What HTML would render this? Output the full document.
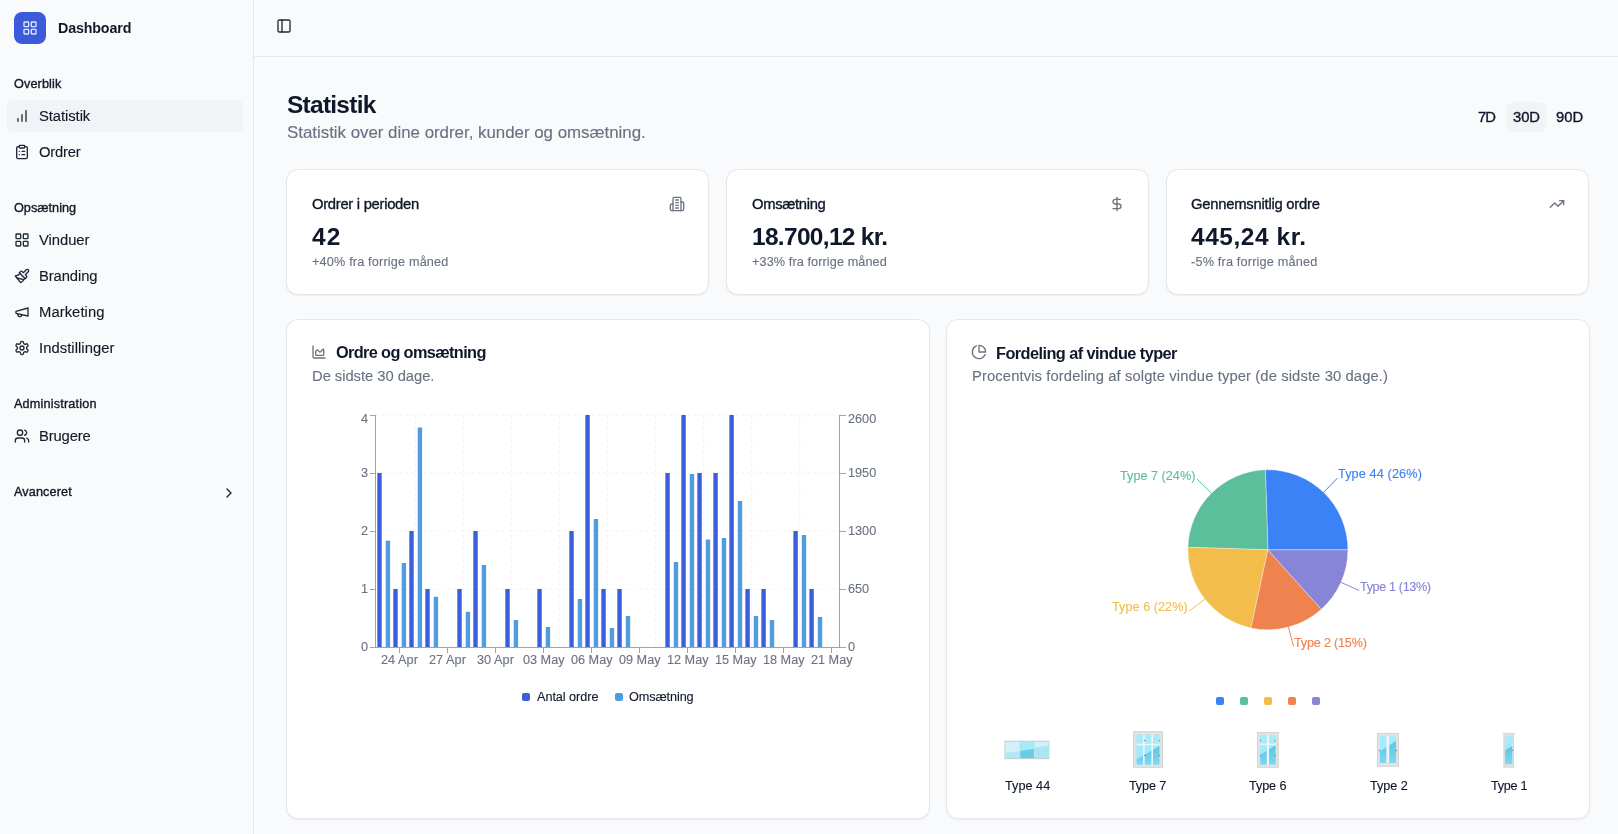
<!DOCTYPE html>
<html><head><meta charset="utf-8"><title>Statistik</title>
<style>
html,body{margin:0;padding:0;}
body{width:1618px;height:834px;overflow:hidden;position:relative;background:#f9fafb;font-family:"Liberation Sans",sans-serif;}
.t{position:absolute;white-space:nowrap;will-change:transform;}
.b{position:absolute;}
.ic{position:absolute;overflow:visible;}
.abs{position:absolute;overflow:visible;}
</style></head><body>
<div class="b" style="left:0px;top:0px;width:253px;height:834px;background:#f9fafb;"></div>
<div class="b" style="left:253px;top:0px;width:1px;height:834px;background:#e6e8ec;"></div>
<div class="b" style="left:254px;top:56px;width:1364px;height:1px;background:#e6e8ec;"></div>
<div class="b" style="left:14px;top:12px;width:32px;height:32px;background:#3b5bdb;border-radius:8px;"></div>
<svg class="ic" style="left:22px;top:20px;width:16px;height:16px;" viewBox="0 0 24 24" fill="none" stroke="#dfe6ff" stroke-width="2" stroke-linecap="round" stroke-linejoin="round"><rect width="7" height="7" x="3" y="3" rx="1"/><rect width="7" height="7" x="14" y="3" rx="1"/><rect width="7" height="7" x="14" y="14" rx="1"/><rect width="7" height="7" x="3" y="14" rx="1"/></svg>
<div class="t" style="left:58.20px;top:21.11px;font-size:14.28px;line-height:14.28px;color:#111827;font-weight:700;letter-spacing:-0.146px;">Dashboard</div>
<div class="t" style="left:14.40px;top:78.06px;font-size:12.68px;line-height:12.68px;color:#111827;-webkit-text-stroke:0.35px currentColor;letter-spacing:0.116px;">Overblik</div>
<div class="b" style="left:7px;top:100px;width:236px;height:31.5px;background:#f1f3f6;border-radius:6px;"></div>
<svg class="ic" style="left:14px;top:108.0px;width:16px;height:16px;" viewBox="0 0 24 24" fill="none" stroke="#1f2937" stroke-width="2" stroke-linecap="round" stroke-linejoin="round"><line x1="12" x2="12" y1="20" y2="10"/><line x1="18" x2="18" y1="20" y2="4"/><line x1="6" x2="6" y1="20" y2="16"/></svg>
<div class="t" style="left:38.60px;top:109.38px;font-size:14.79px;line-height:14.79px;color:#111827;-webkit-text-stroke:0.12px currentColor;letter-spacing:-0.061px;">Statistik</div>
<svg class="ic" style="left:14px;top:143.7px;width:16px;height:16px;" viewBox="0 0 24 24" fill="none" stroke="#1f2937" stroke-width="2" stroke-linecap="round" stroke-linejoin="round"><rect width="8" height="4" x="8" y="2" rx="1" ry="1"/><path d="M16 4h2a2 2 0 0 1 2 2v14a2 2 0 0 1-2 2H6a2 2 0 0 1-2-2V6a2 2 0 0 1 2-2h2"/><path d="M12 11h4"/><path d="M12 16h4"/><path d="M8 11h.01"/><path d="M8 16h.01"/></svg>
<div class="t" style="left:38.60px;top:145.08px;font-size:14.79px;line-height:14.79px;color:#111827;-webkit-text-stroke:0.12px currentColor;letter-spacing:-0.184px;">Ordrer</div>
<svg class="ic" style="left:14px;top:231.8px;width:16px;height:16px;" viewBox="0 0 24 24" fill="none" stroke="#1f2937" stroke-width="2" stroke-linecap="round" stroke-linejoin="round"><rect width="7" height="7" x="3" y="3" rx="1"/><rect width="7" height="7" x="14" y="3" rx="1"/><rect width="7" height="7" x="14" y="14" rx="1"/><rect width="7" height="7" x="3" y="14" rx="1"/></svg>
<div class="t" style="left:38.60px;top:233.18px;font-size:14.79px;line-height:14.79px;color:#111827;-webkit-text-stroke:0.12px currentColor;letter-spacing:-0.040px;">Vinduer</div>
<svg class="ic" style="left:14px;top:267.8px;width:16px;height:16px;" viewBox="0 0 24 24" fill="none" stroke="#1f2937" stroke-width="2" stroke-linecap="round" stroke-linejoin="round"><path d="M18.37 2.63 14 7l-1.59-1.59a2 2 0 0 0-2.82 0L8 7l9 9 1.59-1.59a2 2 0 0 0 0-2.82L17 10l4.37-4.37a2.12 2.12 0 1 0-3-3Z"/><path d="M9 8c-2 3-4 3.5-7 4l8 10c2-1 6-5 6-7"/><path d="M14.5 17.5 4.5 15"/></svg>
<div class="t" style="left:38.60px;top:269.18px;font-size:14.79px;line-height:14.79px;color:#111827;-webkit-text-stroke:0.12px currentColor;letter-spacing:-0.096px;">Branding</div>
<svg class="ic" style="left:14px;top:303.8px;width:16px;height:16px;" viewBox="0 0 24 24" fill="none" stroke="#1f2937" stroke-width="2" stroke-linecap="round" stroke-linejoin="round"><path d="m3 11 18-5v12L3 14v-3z"/><path d="M11.6 16.8a3 3 0 1 1-5.8-1.6"/></svg>
<div class="t" style="left:38.60px;top:305.18px;font-size:14.79px;line-height:14.79px;color:#111827;-webkit-text-stroke:0.12px currentColor;letter-spacing:0.067px;">Marketing</div>
<svg class="ic" style="left:14px;top:339.6px;width:16px;height:16px;" viewBox="0 0 24 24" fill="none" stroke="#1f2937" stroke-width="2" stroke-linecap="round" stroke-linejoin="round"><path d="M12.22 2h-.44a2 2 0 0 0-2 2v.18a2 2 0 0 1-1 1.73l-.43.25a2 2 0 0 1-2 0l-.15-.08a2 2 0 0 0-2.73.73l-.22.38a2 2 0 0 0 .73 2.73l.15.1a2 2 0 0 1 1 1.72v.51a2 2 0 0 1-1 1.74l-.15.09a2 2 0 0 0-.73 2.73l.22.38a2 2 0 0 0 2.73.73l.15-.08a2 2 0 0 1 2 0l.43.25a2 2 0 0 1 1 1.73V20a2 2 0 0 0 2 2h.44a2 2 0 0 0 2-2v-.18a2 2 0 0 1 1-1.73l.43-.25a2 2 0 0 1 2 0l.15.08a2 2 0 0 0 2.73-.73l.22-.39a2 2 0 0 0-.73-2.73l-.15-.08a2 2 0 0 1-1-1.74v-.5a2 2 0 0 1 1-1.74l.15-.09a2 2 0 0 0 .73-2.73l-.22-.38a2 2 0 0 0-2.73-.73l-.15.08a2 2 0 0 1-2 0l-.43-.25a2 2 0 0 1-1-1.73V4a2 2 0 0 0-2-2z"/><circle cx="12" cy="12" r="3"/></svg>
<div class="t" style="left:38.60px;top:340.98px;font-size:14.79px;line-height:14.79px;color:#111827;-webkit-text-stroke:0.12px currentColor;letter-spacing:0.057px;">Indstillinger</div>
<svg class="ic" style="left:14px;top:427.7px;width:16px;height:16px;" viewBox="0 0 24 24" fill="none" stroke="#1f2937" stroke-width="2" stroke-linecap="round" stroke-linejoin="round"><path d="M16 21v-2a4 4 0 0 0-4-4H6a4 4 0 0 0-4 4v2"/><circle cx="9" cy="7" r="4"/><path d="M22 21v-2a4 4 0 0 0-3-3.87"/><path d="M16 3.13a4 4 0 0 1 0 7.75"/></svg>
<div class="t" style="left:38.60px;top:429.08px;font-size:14.79px;line-height:14.79px;color:#111827;-webkit-text-stroke:0.12px currentColor;letter-spacing:-0.127px;">Brugere</div>
<div class="t" style="left:14.40px;top:202.16px;font-size:12.68px;line-height:12.68px;color:#111827;-webkit-text-stroke:0.35px currentColor;letter-spacing:0.013px;">Opsætning</div>
<div class="t" style="left:14.40px;top:397.96px;font-size:12.68px;line-height:12.68px;color:#111827;-webkit-text-stroke:0.35px currentColor;letter-spacing:0.165px;">Administration</div>
<div class="t" style="left:14.40px;top:486.06px;font-size:12.68px;line-height:12.68px;color:#111827;-webkit-text-stroke:0.35px currentColor;letter-spacing:0.108px;">Avanceret</div>
<svg class="ic" style="left:221px;top:484.5px;width:16px;height:16px;" viewBox="0 0 24 24" fill="none" stroke="#1f2937" stroke-width="2" stroke-linecap="round" stroke-linejoin="round"><path d="m9 18 6-6-6-6"/></svg>
<svg class="ic" style="left:276px;top:17.8px;width:16px;height:16px;" viewBox="0 0 24 24" fill="none" stroke="#1f2937" stroke-width="2" stroke-linecap="round" stroke-linejoin="round"><rect width="18" height="18" x="3" y="3" rx="2"/><path d="M9 3v18"/></svg>
<div class="t" style="left:287.00px;top:92.77px;font-size:24.48px;line-height:24.48px;color:#0f172a;font-weight:700;letter-spacing:-0.732px;">Statistik</div>
<div class="t" style="left:287.00px;top:125.18px;font-size:16.91px;line-height:16.91px;color:#687182;-webkit-text-stroke:0.12px currentColor;letter-spacing:-0.025px;">Statistik over dine ordrer, kunder og omsætning.</div>
<div class="b" style="left:1506.5px;top:101.5px;width:39px;height:30.5px;background:#f1f3f6;border-radius:6px;"></div>
<div class="t" style="left:1477.50px;top:109.98px;font-size:14.79px;line-height:14.79px;color:#0f172a;-webkit-text-stroke:0.35px currentColor;letter-spacing:-1.048px;">7D</div>
<div class="t" style="left:1512.50px;top:109.98px;font-size:14.79px;line-height:14.79px;color:#0f172a;-webkit-text-stroke:0.35px currentColor;letter-spacing:-0.039px;">30D</div>
<div class="t" style="left:1556.30px;top:109.98px;font-size:14.79px;line-height:14.79px;color:#0f172a;-webkit-text-stroke:0.35px currentColor;letter-spacing:0.061px;">90D</div>
<div class="b" style="left:286.3px;top:169.1px;width:423.0px;height:126.0px;background:#fff;border:1px solid #e5e7eb;border-radius:12px;box-shadow:0 1px 2px rgba(0,0,0,0.06);box-sizing:border-box;"></div>
<div class="b" style="left:726.0px;top:169.1px;width:423.0px;height:126.0px;background:#fff;border:1px solid #e5e7eb;border-radius:12px;box-shadow:0 1px 2px rgba(0,0,0,0.06);box-sizing:border-box;"></div>
<div class="b" style="left:1165.7px;top:169.1px;width:423.0px;height:126.0px;background:#fff;border:1px solid #e5e7eb;border-radius:12px;box-shadow:0 1px 2px rgba(0,0,0,0.06);box-sizing:border-box;"></div>
<div class="t" style="left:311.80px;top:197.38px;font-size:14.79px;line-height:14.79px;color:#0f172a;-webkit-text-stroke:0.35px currentColor;letter-spacing:-0.284px;">Ordrer i perioden</div>
<div class="t" style="left:311.80px;top:225.47px;font-size:24.48px;line-height:24.48px;color:#0f172a;font-weight:700;letter-spacing:1.042px;">42</div>
<div class="t" style="left:311.80px;top:255.76px;font-size:12.68px;line-height:12.68px;color:#687182;-webkit-text-stroke:0.12px currentColor;letter-spacing:0.169px;">+40% fra forrige måned</div>
<div class="t" style="left:751.50px;top:197.38px;font-size:14.79px;line-height:14.79px;color:#0f172a;-webkit-text-stroke:0.35px currentColor;letter-spacing:-0.322px;">Omsætning</div>
<div class="t" style="left:751.50px;top:225.47px;font-size:24.48px;line-height:24.48px;color:#0f172a;font-weight:700;letter-spacing:-0.679px;">18.700,12 kr.</div>
<div class="t" style="left:751.50px;top:255.76px;font-size:12.68px;line-height:12.68px;color:#687182;-webkit-text-stroke:0.12px currentColor;letter-spacing:0.097px;">+33% fra forrige måned</div>
<div class="t" style="left:1191.20px;top:197.38px;font-size:14.79px;line-height:14.79px;color:#0f172a;-webkit-text-stroke:0.35px currentColor;letter-spacing:-0.231px;">Gennemsnitlig ordre</div>
<div class="t" style="left:1191.20px;top:225.47px;font-size:24.48px;line-height:24.48px;color:#0f172a;font-weight:700;letter-spacing:0.548px;">445,24 kr.</div>
<div class="t" style="left:1191.20px;top:255.76px;font-size:12.68px;line-height:12.68px;color:#687182;-webkit-text-stroke:0.12px currentColor;letter-spacing:0.183px;">-5% fra forrige måned</div>
<svg class="ic" style="left:669.3px;top:196.2px;width:16px;height:16px;" viewBox="0 0 24 24" fill="none" stroke="#6b7280" stroke-width="2" stroke-linecap="round" stroke-linejoin="round"><path d="M6 22V4a2 2 0 0 1 2-2h8a2 2 0 0 1 2 2v18Z"/><path d="M6 12H4a2 2 0 0 0-2 2v6a2 2 0 0 0 2 2h2"/><path d="M18 9h2a2 2 0 0 1 2 2v9a2 2 0 0 1-2 2h-2"/><path d="M10 6h4"/><path d="M10 10h4"/><path d="M10 14h4"/><path d="M10 18h4"/></svg>
<svg class="ic" style="left:1109.0px;top:196.0px;width:16px;height:16px;" viewBox="0 0 24 24" fill="none" stroke="#6b7280" stroke-width="2" stroke-linecap="round" stroke-linejoin="round"><line x1="12" x2="12" y1="2" y2="22"/><path d="M17 5H9.5a3.5 3.5 0 0 0 0 7h5a3.5 3.5 0 0 1 0 7H6"/></svg>
<svg class="ic" style="left:1548.9px;top:195.8px;width:16px;height:16px;" viewBox="0 0 24 24" fill="none" stroke="#6b7280" stroke-width="2" stroke-linecap="round" stroke-linejoin="round"><polyline points="22 7 13.5 15.5 8.5 10.5 2 17"/><polyline points="16 7 22 7 22 13"/></svg>
<div class="b" style="left:286.3px;top:319.0px;width:643.5px;height:500.0px;background:#fff;border:1px solid #e5e7eb;border-radius:12px;box-shadow:0 1px 2px rgba(0,0,0,0.06);box-sizing:border-box;"></div>
<div class="b" style="left:946.0px;top:319.0px;width:643.8px;height:500.0px;background:#fff;border:1px solid #e5e7eb;border-radius:12px;box-shadow:0 1px 2px rgba(0,0,0,0.06);box-sizing:border-box;"></div>
<svg class="ic" style="left:310.6px;top:344.0px;width:16px;height:16px;" viewBox="0 0 24 24" fill="none" stroke="#6b7280" stroke-width="2" stroke-linecap="round" stroke-linejoin="round"><path d="M3 3v16a2 2 0 0 0 2 2h16"/><path d="M7 11.207a.5.5 0 0 1 .146-.353l2-2a.5.5 0 0 1 .708 0l3.292 3.292a.5.5 0 0 0 .708 0l4.292-4.292a.5.5 0 0 1 .854.353V16a1 1 0 0 1-1 1H8a1 1 0 0 1-1-1z"/></svg>
<div class="t" style="left:335.50px;top:344.48px;font-size:16.32px;line-height:16.32px;color:#0f172a;font-weight:700;letter-spacing:-0.645px;">Ordre og omsætning</div>
<div class="t" style="left:311.80px;top:369.48px;font-size:14.79px;line-height:14.79px;color:#687182;-webkit-text-stroke:0.12px currentColor;letter-spacing:-0.048px;">De sidste 30 dage.</div>
<svg class="ic" style="left:971.1px;top:343.9px;width:16px;height:16px;" viewBox="0 0 24 24" fill="none" stroke="#6b7280" stroke-width="2" stroke-linecap="round" stroke-linejoin="round"><path d="M21.21 15.89A10 10 0 1 1 8 2.83"/><path d="M22 12A10 10 0 0 0 12 2v10z"/></svg>
<div class="t" style="left:995.70px;top:344.68px;font-size:16.32px;line-height:16.32px;color:#0f172a;font-weight:700;letter-spacing:-0.559px;">Fordeling af vindue typer</div>
<div class="t" style="left:971.80px;top:369.38px;font-size:14.79px;line-height:14.79px;color:#687182;-webkit-text-stroke:0.12px currentColor;letter-spacing:0.108px;">Procentvis fordeling af solgte vindue typer (de sidste 30 dage.)</div>
<svg class="abs" style="left:0;top:0" width="1618" height="834" viewBox="0 0 1618 834"><g stroke="#f0f1f3" stroke-dasharray="3 3" stroke-width="1"><line x1="375.7" x2="839.8" y1="415.0" y2="415.0"/><line x1="375.7" x2="839.8" y1="473.0" y2="473.0"/><line x1="375.7" x2="839.8" y1="531.0" y2="531.0"/><line x1="375.7" x2="839.8" y1="589.0" y2="589.0"/><line x1="375.7" x2="839.8" y1="647.0" y2="647.0"/><line x1="415.70862068965516" x2="415.70862068965516" y1="415.0" y2="647.0"/><line x1="463.7189655172414" x2="463.7189655172414" y1="415.0" y2="647.0"/><line x1="511.7293103448276" x2="511.7293103448276" y1="415.0" y2="647.0"/><line x1="559.7396551724138" x2="559.7396551724138" y1="415.0" y2="647.0"/><line x1="607.75" x2="607.75" y1="415.0" y2="647.0"/><line x1="655.7603448275861" x2="655.7603448275861" y1="415.0" y2="647.0"/><line x1="703.7706896551724" x2="703.7706896551724" y1="415.0" y2="647.0"/><line x1="751.7810344827585" x2="751.7810344827585" y1="415.0" y2="647.0"/><line x1="799.7913793103447" x2="799.7913793103447" y1="415.0" y2="647.0"/></g><rect x="377.30" y="473.00" width="4.4" height="174.00" fill="#3b5fdc"/><rect x="385.70" y="540.70" width="4.4" height="106.30" fill="#4f9dde"/><rect x="393.30" y="589.00" width="4.4" height="58.00" fill="#3b5fdc"/><rect x="401.70" y="563.00" width="4.4" height="84.00" fill="#4f9dde"/><rect x="409.31" y="531.00" width="4.4" height="116.00" fill="#3b5fdc"/><rect x="417.71" y="427.50" width="4.4" height="219.50" fill="#4f9dde"/><rect x="425.31" y="589.00" width="4.4" height="58.00" fill="#3b5fdc"/><rect x="433.71" y="596.80" width="4.4" height="50.20" fill="#4f9dde"/><rect x="457.32" y="589.00" width="4.4" height="58.00" fill="#3b5fdc"/><rect x="465.72" y="611.80" width="4.4" height="35.20" fill="#4f9dde"/><rect x="473.32" y="531.00" width="4.4" height="116.00" fill="#3b5fdc"/><rect x="481.72" y="565.00" width="4.4" height="82.00" fill="#4f9dde"/><rect x="505.33" y="589.00" width="4.4" height="58.00" fill="#3b5fdc"/><rect x="513.73" y="620.00" width="4.4" height="27.00" fill="#4f9dde"/><rect x="537.33" y="589.00" width="4.4" height="58.00" fill="#3b5fdc"/><rect x="545.73" y="627.00" width="4.4" height="20.00" fill="#4f9dde"/><rect x="569.34" y="531.00" width="4.4" height="116.00" fill="#3b5fdc"/><rect x="577.74" y="599.00" width="4.4" height="48.00" fill="#4f9dde"/><rect x="585.34" y="415.00" width="4.4" height="232.00" fill="#3b5fdc"/><rect x="593.74" y="519.00" width="4.4" height="128.00" fill="#4f9dde"/><rect x="601.35" y="589.00" width="4.4" height="58.00" fill="#3b5fdc"/><rect x="609.75" y="628.00" width="4.4" height="19.00" fill="#4f9dde"/><rect x="617.35" y="589.00" width="4.4" height="58.00" fill="#3b5fdc"/><rect x="625.75" y="616.00" width="4.4" height="31.00" fill="#4f9dde"/><rect x="665.36" y="473.00" width="4.4" height="174.00" fill="#3b5fdc"/><rect x="673.76" y="562.00" width="4.4" height="85.00" fill="#4f9dde"/><rect x="681.37" y="415.00" width="4.4" height="232.00" fill="#3b5fdc"/><rect x="689.77" y="474.00" width="4.4" height="173.00" fill="#4f9dde"/><rect x="697.37" y="473.00" width="4.4" height="174.00" fill="#3b5fdc"/><rect x="705.77" y="539.50" width="4.4" height="107.50" fill="#4f9dde"/><rect x="713.37" y="473.00" width="4.4" height="174.00" fill="#3b5fdc"/><rect x="721.77" y="538.00" width="4.4" height="109.00" fill="#4f9dde"/><rect x="729.38" y="415.00" width="4.4" height="232.00" fill="#3b5fdc"/><rect x="737.78" y="501.00" width="4.4" height="146.00" fill="#4f9dde"/><rect x="745.38" y="589.00" width="4.4" height="58.00" fill="#3b5fdc"/><rect x="753.78" y="616.00" width="4.4" height="31.00" fill="#4f9dde"/><rect x="761.38" y="589.00" width="4.4" height="58.00" fill="#3b5fdc"/><rect x="769.78" y="620.00" width="4.4" height="27.00" fill="#4f9dde"/><rect x="793.39" y="531.00" width="4.4" height="116.00" fill="#3b5fdc"/><rect x="801.79" y="535.00" width="4.4" height="112.00" fill="#4f9dde"/><rect x="809.39" y="589.00" width="4.4" height="58.00" fill="#3b5fdc"/><rect x="817.79" y="617.00" width="4.4" height="30.00" fill="#4f9dde"/><g stroke="#a3a3a3" stroke-width="1" shape-rendering="crispEdges"><line x1="375.7" x2="375.7" y1="415.0" y2="647.0"/><line x1="839.8" x2="839.8" y1="415.0" y2="647.0"/><line x1="375.7" x2="839.8" y1="647.0" y2="647.0"/><line x1="369.7" x2="375.7" y1="415.0" y2="415.0"/><line x1="839.8" x2="845.8" y1="415.0" y2="415.0"/><line x1="369.7" x2="375.7" y1="473.0" y2="473.0"/><line x1="839.8" x2="845.8" y1="473.0" y2="473.0"/><line x1="369.7" x2="375.7" y1="531.0" y2="531.0"/><line x1="839.8" x2="845.8" y1="531.0" y2="531.0"/><line x1="369.7" x2="375.7" y1="589.0" y2="589.0"/><line x1="839.8" x2="845.8" y1="589.0" y2="589.0"/><line x1="369.7" x2="375.7" y1="647.0" y2="647.0"/><line x1="839.8" x2="845.8" y1="647.0" y2="647.0"/><line x1="399.7051724137931" x2="399.7051724137931" y1="647.0" y2="653.0"/><line x1="447.7155172413793" x2="447.7155172413793" y1="647.0" y2="653.0"/><line x1="495.7258620689655" x2="495.7258620689655" y1="647.0" y2="653.0"/><line x1="543.7362068965517" x2="543.7362068965517" y1="647.0" y2="653.0"/><line x1="591.7465517241378" x2="591.7465517241378" y1="647.0" y2="653.0"/><line x1="639.7568965517241" x2="639.7568965517241" y1="647.0" y2="653.0"/><line x1="687.7672413793102" x2="687.7672413793102" y1="647.0" y2="653.0"/><line x1="735.7775862068966" x2="735.7775862068966" y1="647.0" y2="653.0"/><line x1="783.7879310344827" x2="783.7879310344827" y1="647.0" y2="653.0"/><line x1="831.7982758620689" x2="831.7982758620689" y1="647.0" y2="653.0"/></g></svg>
<div class="t" style="left:360.55px;top:413.06px;font-size:12.68px;line-height:12.68px;color:#6b7280;-webkit-text-stroke:0.12px currentColor;">4</div>
<div class="t" style="left:360.55px;top:467.26px;font-size:12.68px;line-height:12.68px;color:#6b7280;-webkit-text-stroke:0.12px currentColor;">3</div>
<div class="t" style="left:360.55px;top:525.26px;font-size:12.68px;line-height:12.68px;color:#6b7280;-webkit-text-stroke:0.12px currentColor;">2</div>
<div class="t" style="left:360.55px;top:583.26px;font-size:12.68px;line-height:12.68px;color:#6b7280;-webkit-text-stroke:0.12px currentColor;">1</div>
<div class="t" style="left:360.55px;top:641.26px;font-size:12.68px;line-height:12.68px;color:#6b7280;-webkit-text-stroke:0.12px currentColor;">0</div>
<div class="t" style="left:848.20px;top:413.06px;font-size:12.68px;line-height:12.68px;color:#6b7280;-webkit-text-stroke:0.12px currentColor;">2600</div>
<div class="t" style="left:848.20px;top:467.26px;font-size:12.68px;line-height:12.68px;color:#6b7280;-webkit-text-stroke:0.12px currentColor;">1950</div>
<div class="t" style="left:848.20px;top:525.26px;font-size:12.68px;line-height:12.68px;color:#6b7280;-webkit-text-stroke:0.12px currentColor;">1300</div>
<div class="t" style="left:848.20px;top:583.26px;font-size:12.68px;line-height:12.68px;color:#6b7280;-webkit-text-stroke:0.12px currentColor;">650</div>
<div class="t" style="left:848.20px;top:641.26px;font-size:12.68px;line-height:12.68px;color:#6b7280;-webkit-text-stroke:0.12px currentColor;">0</div>
<div class="t" style="left:380.91px;top:653.96px;font-size:12.68px;line-height:12.68px;color:#6b7280;-webkit-text-stroke:0.12px currentColor;letter-spacing:0.044px;">24 Apr</div>
<div class="t" style="left:428.92px;top:653.96px;font-size:12.68px;line-height:12.68px;color:#6b7280;-webkit-text-stroke:0.12px currentColor;letter-spacing:0.044px;">27 Apr</div>
<div class="t" style="left:476.93px;top:653.96px;font-size:12.68px;line-height:12.68px;color:#6b7280;-webkit-text-stroke:0.12px currentColor;letter-spacing:0.044px;">30 Apr</div>
<div class="t" style="left:522.99px;top:653.96px;font-size:12.68px;line-height:12.68px;color:#6b7280;-webkit-text-stroke:0.12px currentColor;letter-spacing:-0.009px;">03 May</div>
<div class="t" style="left:571.00px;top:653.96px;font-size:12.68px;line-height:12.68px;color:#6b7280;-webkit-text-stroke:0.12px currentColor;letter-spacing:-0.009px;">06 May</div>
<div class="t" style="left:619.01px;top:653.96px;font-size:12.68px;line-height:12.68px;color:#6b7280;-webkit-text-stroke:0.12px currentColor;letter-spacing:-0.009px;">09 May</div>
<div class="t" style="left:667.02px;top:653.96px;font-size:12.68px;line-height:12.68px;color:#6b7280;-webkit-text-stroke:0.12px currentColor;letter-spacing:-0.009px;">12 May</div>
<div class="t" style="left:715.03px;top:653.96px;font-size:12.68px;line-height:12.68px;color:#6b7280;-webkit-text-stroke:0.12px currentColor;letter-spacing:-0.009px;">15 May</div>
<div class="t" style="left:763.04px;top:653.96px;font-size:12.68px;line-height:12.68px;color:#6b7280;-webkit-text-stroke:0.12px currentColor;letter-spacing:-0.009px;">18 May</div>
<div class="t" style="left:811.05px;top:653.96px;font-size:12.68px;line-height:12.68px;color:#6b7280;-webkit-text-stroke:0.12px currentColor;letter-spacing:-0.009px;">21 May</div>
<div class="b" style="left:522px;top:693px;width:8px;height:8px;background:#3b5fdc;border-radius:2px;"></div>
<div class="t" style="left:536.60px;top:690.96px;font-size:12.68px;line-height:12.68px;color:#0f172a;-webkit-text-stroke:0.12px currentColor;letter-spacing:-0.053px;">Antal ordre</div>
<div class="b" style="left:615px;top:693px;width:8px;height:8px;background:#4f9dde;border-radius:2px;"></div>
<div class="t" style="left:629.00px;top:690.96px;font-size:12.68px;line-height:12.68px;color:#0f172a;-webkit-text-stroke:0.12px currentColor;letter-spacing:-0.110px;">Omsætning</div>
<svg class="abs" style="left:0;top:0" width="1618" height="834" viewBox="0 0 1618 834"><path d="M1267.9,549.8 L1347.90,549.80 A80,80 0 0 0 1265.39,469.84 Z" fill="#3b82f6" stroke="#fff" stroke-width="0.35"/><path d="M1323.57,492.35 L1337.49,477.99" stroke="#3b82f6" stroke-width="1" fill="none"/><path d="M1267.9,549.8 L1265.39,469.84 A80,80 0 0 0 1187.94,547.29 Z" fill="#5bbf9b" stroke="#fff" stroke-width="0.35"/><path d="M1211.33,493.23 L1197.19,479.09" stroke="#5bbf9b" stroke-width="1" fill="none"/><path d="M1267.9,549.8 L1187.94,547.29 A80,80 0 0 0 1250.99,627.99 Z" fill="#f3bd4b" stroke="#fff" stroke-width="0.35"/><path d="M1204.86,599.05 L1189.10,611.37" stroke="#f3bd4b" stroke-width="1" fill="none"/><path d="M1267.9,549.8 L1250.99,627.99 A80,80 0 0 0 1321.38,609.30 Z" fill="#ee834f" stroke="#fff" stroke-width="0.35"/><path d="M1288.44,627.12 L1293.57,646.45" stroke="#ee834f" stroke-width="1" fill="none"/><path d="M1267.9,549.8 L1321.38,609.30 A80,80 0 0 0 1347.90,549.80 Z" fill="#8884d8" stroke="#fff" stroke-width="0.35"/><path d="M1340.97,582.37 L1359.24,590.51" stroke="#8884d8" stroke-width="1" fill="none"/></svg>
<div class="t" style="left:1338.00px;top:467.86px;font-size:12.68px;line-height:12.68px;color:#3b82f6;-webkit-text-stroke:0.12px currentColor;letter-spacing:0.122px;">Type 44 (26%)</div>
<div class="t" style="left:1120.20px;top:470.06px;font-size:12.68px;line-height:12.68px;color:#5bbf9b;-webkit-text-stroke:0.12px currentColor;">Type 7 (24%)</div>
<div class="t" style="left:1112.10px;top:600.76px;font-size:12.68px;line-height:12.68px;color:#f3bd4b;-webkit-text-stroke:0.12px currentColor;letter-spacing:0.028px;">Type 6 (22%)</div>
<div class="t" style="left:1293.80px;top:636.56px;font-size:12.68px;line-height:12.68px;color:#ee834f;-webkit-text-stroke:0.12px currentColor;letter-spacing:-0.222px;">Type 2 (15%)</div>
<div class="t" style="left:1360.00px;top:580.76px;font-size:12.68px;line-height:12.68px;color:#8884d8;-webkit-text-stroke:0.12px currentColor;letter-spacing:-0.389px;">Type 1 (13%)</div>
<div class="b" style="left:1216px;top:697px;width:8px;height:8px;background:#3b82f6;border-radius:2px;"></div>
<div class="b" style="left:1240px;top:697px;width:8px;height:8px;background:#5bbf9b;border-radius:2px;"></div>
<div class="b" style="left:1264px;top:697px;width:8px;height:8px;background:#f3bd4b;border-radius:2px;"></div>
<div class="b" style="left:1288px;top:697px;width:8px;height:8px;background:#ee834f;border-radius:2px;"></div>
<div class="b" style="left:1312px;top:697px;width:8px;height:8px;background:#8884d8;border-radius:2px;"></div>
<svg class="abs" style="left:0;top:0" width="1618" height="834" viewBox="0 0 1618 834"><defs><linearGradient id="dk" x1="0" y1="0" x2="0" y2="1"><stop offset="0" stop-color="#55c6e6"/><stop offset="1" stop-color="#7fd9f0"/></linearGradient><linearGradient id="lt" x1="0" y1="0" x2="0" y2="1"><stop offset="0" stop-color="#a6ecfa"/><stop offset="1" stop-color="#a0e6f7"/></linearGradient></defs><rect x="1005" y="741.2" width="43.9" height="17.5" fill="#d2eef6" stroke="#b7c3c8" stroke-width="0.9"/><rect x="1005.6" y="741.8" width="14.6" height="16.3" fill="#d3f1f9"/><path d="M1005.6 752.7 L1020.2 751 L1020.2 758.1 L1005.6 758.1Z" fill="#b3e7f5"/><rect x="1020.2" y="741.8" width="14.2" height="16.3" fill="#a4ebf8"/><path d="M1020.2 751 L1034.4 748.7 L1034.4 758.1 L1020.2 758.1Z" fill="#65cde6"/><rect x="1034.4" y="741.8" width="14" height="16.3" fill="#cdf3fa"/><path d="M1034.4 747.5 L1048.4 745.8 L1048.4 758.1 L1034.4 758.1Z" fill="#a9e5f4"/><line x1="1020.2" x2="1020.2" y1="741.5" y2="758.5" stroke="#bccbd0" stroke-width="0.6"/><line x1="1034.4" x2="1034.4" y1="741.5" y2="758.5" stroke="#d0e0e4" stroke-width="0.6"/><rect x="1133.1" y="731.3" width="30.00" height="36.50" fill="#e2e2e2"/><rect x="1133.6" y="731.8" width="29.00" height="35.50" fill="none" stroke="#d2d2d2" stroke-width="0.8"/><clipPath id="cw1"><rect x="1136.4" y="734.6" width="23.20" height="30.20"/></clipPath><rect x="1136.4" y="734.6" width="23.20" height="30.20" fill="url(#lt)"/><path clip-path="url(#cw1)" d="M1136.4,759.4 L1159.6,745.9 L1159.6,764.8 L1136.4,764.8 Z" fill="url(#dk)"/><rect x="1143.10" y="734.6" width="1.6" height="30.20" fill="#eef6f8"/><rect x="1151.40" y="734.6" width="1.6" height="30.20" fill="#eef6f8"/><rect x="1136.4" y="743.70" width="23.20" height="1.6" fill="#eef6f8"/><rect x="1144.00" y="739.90" width="1.2" height="1.2" fill="#7a8290"/><rect x="1158.60" y="739.90" width="1.2" height="1.2" fill="#7a8290"/><rect x="1144.00" y="754.90" width="1.2" height="1.2" fill="#7a8290"/><rect x="1158.60" y="754.90" width="1.2" height="1.2" fill="#7a8290"/><rect x="1257.1" y="731.9" width="21.60" height="35.80" fill="#e2e2e2"/><rect x="1257.6" y="732.4" width="20.60" height="34.80" fill="none" stroke="#d2d2d2" stroke-width="0.8"/><clipPath id="cw2"><rect x="1260.1" y="735.1" width="15.60" height="29.70"/></clipPath><rect x="1260.1" y="735.1" width="15.60" height="29.70" fill="url(#lt)"/><path clip-path="url(#cw2)" d="M1260.1,755.0 L1275.7,745.3 L1275.7,764.8 L1260.1,764.8 Z" fill="url(#dk)"/><rect x="1266.80" y="735.1" width="2.2" height="29.70" fill="#eef6f8"/><rect x="1260.1" y="743.50" width="15.60" height="1.6" fill="#eef6f8"/><rect x="1259.90" y="739.90" width="1.2" height="1.2" fill="#7a8290"/><rect x="1274.60" y="739.90" width="1.2" height="1.2" fill="#7a8290"/><rect x="1259.90" y="754.90" width="1.2" height="1.2" fill="#7a8290"/><rect x="1274.60" y="754.90" width="1.2" height="1.2" fill="#7a8290"/><rect x="1376.9" y="732.9" width="22.10" height="34.00" fill="#e2e2e2"/><rect x="1377.4" y="733.4" width="21.10" height="33.00" fill="none" stroke="#d2d2d2" stroke-width="0.8"/><clipPath id="cw3"><rect x="1379.8" y="735.6" width="16.20" height="27.30"/></clipPath><rect x="1379.8" y="735.6" width="16.20" height="27.30" fill="url(#lt)"/><path clip-path="url(#cw3)" d="M1379.8,751.5 L1396.0,741.0 L1396.0,762.9 L1379.8,762.9 Z" fill="url(#dk)"/><rect x="1386.40" y="735.6" width="2.8" height="27.30" fill="#eef6f8"/><rect x="1378.90" y="749.90" width="1.2" height="1.2" fill="#7a8290"/><rect x="1395.70" y="749.90" width="1.2" height="1.2" fill="#7a8290"/><rect x="1503.5" y="732.9" width="10.50" height="34.60" fill="#e2e2e2"/><rect x="1504.0" y="733.4" width="9.50" height="33.60" fill="none" stroke="#d2d2d2" stroke-width="0.8"/><clipPath id="cw4"><rect x="1505.1" y="735.9" width="7.30" height="28.30"/></clipPath><rect x="1505.1" y="735.9" width="7.30" height="28.30" fill="url(#lt)"/><path clip-path="url(#cw4)" d="M1505.1,750.2 L1512.4,745.9 L1512.4,764.2 L1505.1,764.2 Z" fill="url(#dk)"/><rect x="1512.00" y="749.80" width="1.2" height="1.2" fill="#7a8290"/><rect x="1502.7" y="732.9" width="12.1" height="1.8" fill="#dcdcdc"/><rect x="1502.7" y="765.7" width="12.1" height="1.8" fill="#dcdcdc"/></svg>
<div class="t" style="left:1004.70px;top:779.66px;font-size:12.68px;line-height:12.68px;color:#0f172a;-webkit-text-stroke:0.12px currentColor;letter-spacing:0.016px;">Type 44</div>
<div class="t" style="left:1129.00px;top:779.66px;font-size:12.68px;line-height:12.68px;color:#0f172a;-webkit-text-stroke:0.12px currentColor;letter-spacing:-0.173px;">Type 7</div>
<div class="t" style="left:1249.25px;top:779.66px;font-size:12.68px;line-height:12.68px;color:#0f172a;-webkit-text-stroke:0.12px currentColor;letter-spacing:-0.123px;">Type 6</div>
<div class="t" style="left:1369.50px;top:779.66px;font-size:12.68px;line-height:12.68px;color:#0f172a;-webkit-text-stroke:0.12px currentColor;letter-spacing:-0.073px;">Type 2</div>
<div class="t" style="left:1490.95px;top:779.66px;font-size:12.68px;line-height:12.68px;color:#0f172a;-webkit-text-stroke:0.12px currentColor;letter-spacing:-0.290px;">Type 1</div>
</body></html>
